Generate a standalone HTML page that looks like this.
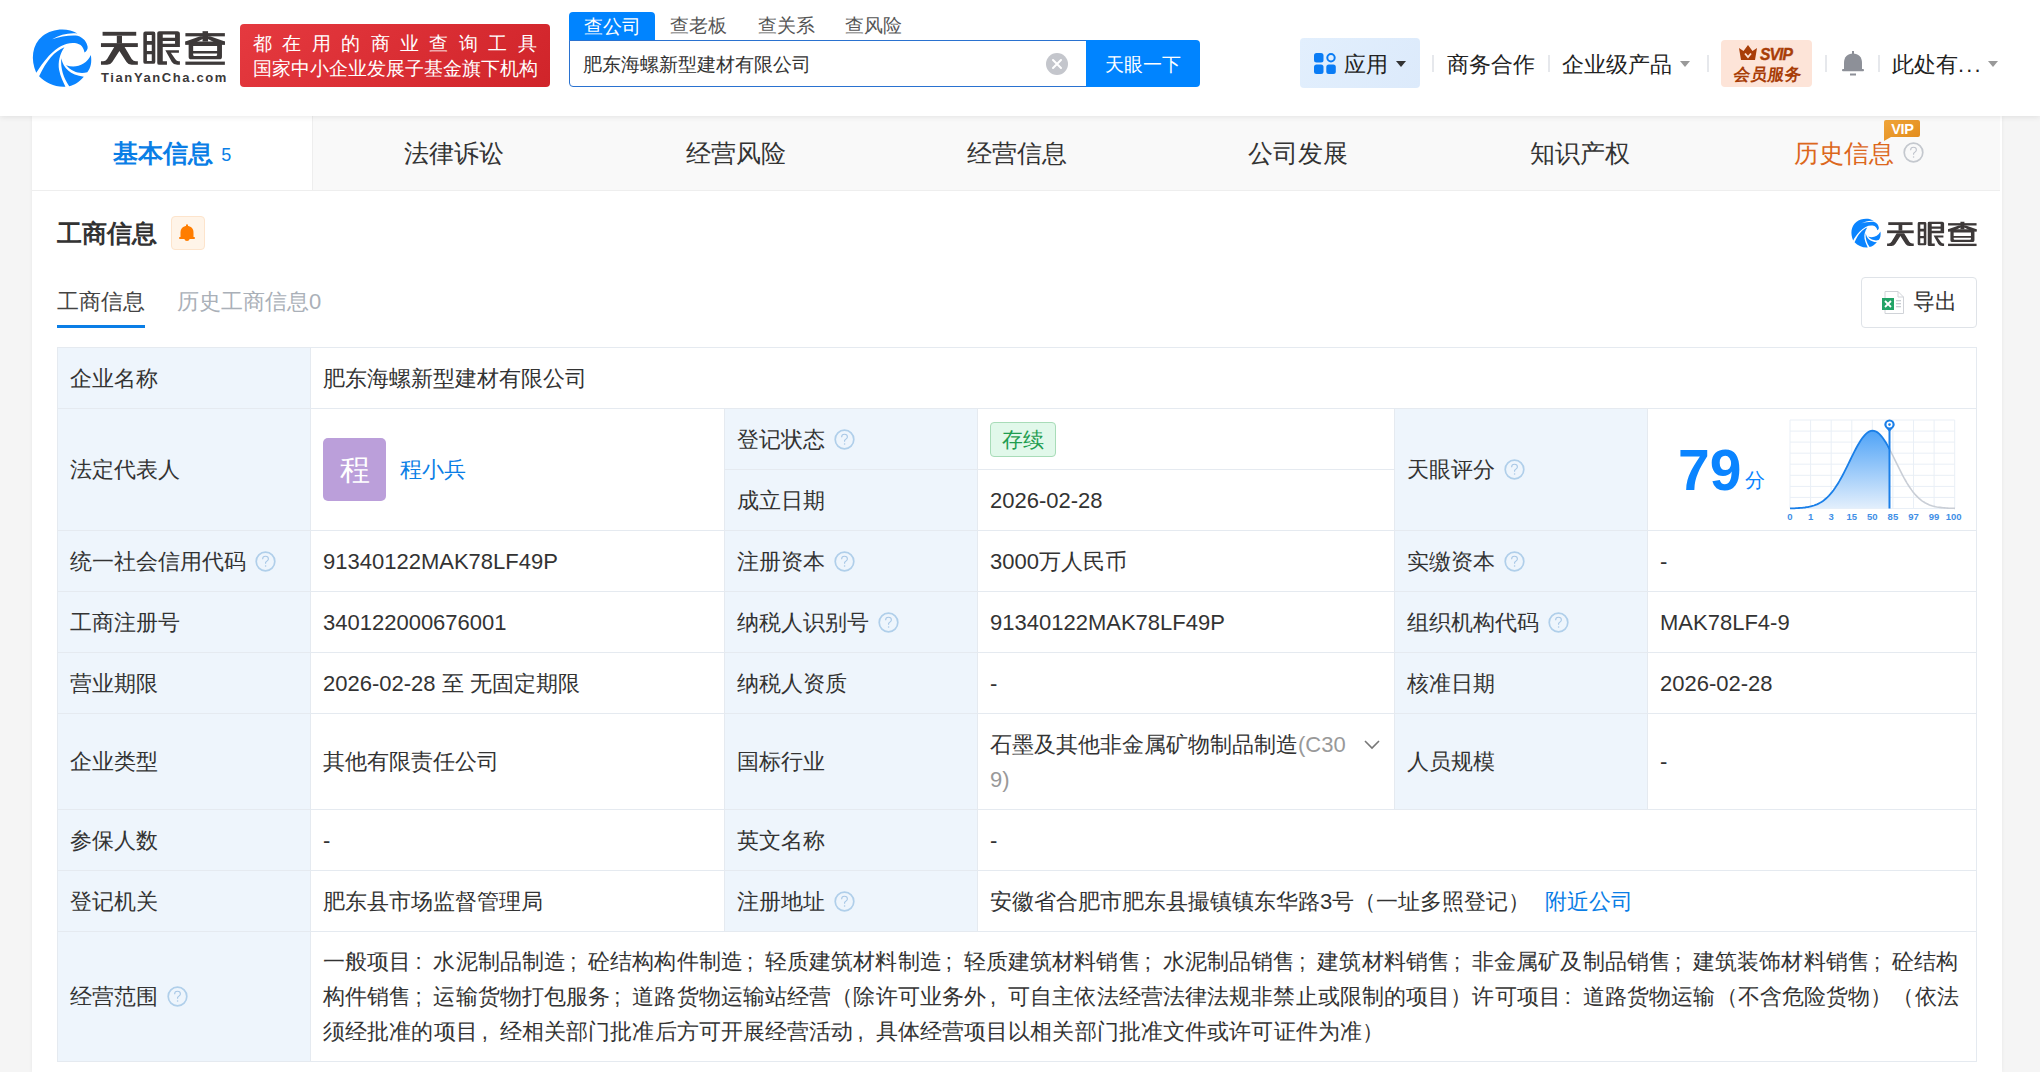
<!DOCTYPE html>
<html><head><meta charset="utf-8">
<style>
*{box-sizing:border-box;margin:0;padding:0}
html,body{width:2040px;height:1072px;overflow:hidden}
body{background:#f5f5f5;font-family:"Liberation Sans",sans-serif;color:#333;position:relative}
.a{position:absolute;white-space:nowrap}
#hdr{position:absolute;left:0;top:0;width:2040px;height:116px;background:#fff;box-shadow:0 1px 6px rgba(0,0,0,.09);z-index:5}
.banner{left:240px;top:24px;width:310px;height:63px;border-radius:4px;background:linear-gradient(135deg,#e5393f,#d0242a);color:#fff}
.stab{top:12px;height:28px;font-size:18.5px;line-height:28px;color:#555}
.sep{width:2px;height:17px;top:55px;background:#e6e8ec}
.nav{top:51px;font-size:21.8px;line-height:28px;color:#222}
.card{position:absolute;left:32px;top:116px;width:1970px;height:956px;background:#fff;box-shadow:0 0 4px rgba(0,0,0,.06)}
.tab{top:0;height:75px;width:281.43px;background:#f9f9f9;font-size:24.5px;line-height:75px;text-align:center;color:#333;border-bottom:1px solid #eee}
.c{position:absolute;border:1px solid #e5eaf0;font-size:22px;line-height:35px;padding:12px 12px;white-space:nowrap;color:#333}
.l{background:#eef5fc}
.q{display:inline-block;vertical-align:middle;margin-left:9px;position:relative;top:0px}
.c{display:flex;align-items:center}
.av{display:inline-block;width:63px;height:63px;border-radius:5px;background:#bb9fda;color:#fff;font-size:30px;line-height:63px;text-align:center}
.lnk{color:#0a7ee6}
.tag{display:inline-block;height:35px;padding:0 11px;border:1px solid #a8dcb8;background:#e1f8ea;border-radius:4px;color:#1f9d50;font-size:21px;line-height:33px}
.chev{position:absolute;right:14px;top:26px}
.pl{display:inline-block;width:22px;padding-left:4px;font-style:normal}
</style></head><body>
<svg width="0" height="0" style="position:absolute"><defs>
<symbol id="lt" viewBox="0 0 2040 680"><g fill="#3d3939">
<rect x="70" y="90" width="520" height="60"/>
<rect x="45" y="265" width="570" height="60"/>
<rect x="290" y="150" width="80" height="120"/>
<path d="M250,325 L410,325 L520,510 Q545,545 585,545 L615,545 L615,600 L520,600 Q470,600 440,555 L330,385 L220,555 Q190,600 140,600 L45,600 L45,545 L80,545 Q115,545 140,510 Z"/>
<path fill-rule="evenodd" d="M730,85 L855,85 Q885,85 885,115 L885,555 Q885,585 855,585 L730,585 Q700,585 700,555 L700,115 Q700,85 730,85 Z M755,140 L830,140 L830,230 L755,230 Z M755,290 L830,290 L830,385 L755,385 Z M755,435 L830,435 L830,540 L755,540 Z"/>
<path fill-rule="evenodd" d="M945,80 L1225,80 Q1265,80 1265,120 L1265,325 L1000,325 L1000,545 L1065,545 L1065,600 L945,600 Q915,600 915,570 L915,110 Q915,80 945,80 Z M1000,130 L1190,130 L1190,180 L1000,180 Z M1000,230 L1190,230 L1190,275 L1000,275 Z"/>
<path d="M1040,375 L1250,375 L1250,415 L1125,415 L1195,515 Q1215,545 1245,545 L1265,545 L1265,600 L1225,600 Q1170,600 1140,555 Z"/>
<rect x="1350" y="110" width="610" height="50"/>
<rect x="1615" y="80" width="85" height="160"/>
<path d="M1350,240 L1580,160 L1640,160 L1640,190 L1490,265 L1350,290 Z"/>
<path d="M1960,240 L1730,160 L1675,160 L1675,190 L1825,265 L1960,290 Z"/>
<path fill-rule="evenodd" d="M1350,240 L1960,240 L1960,290 L1915,290 L1915,475 Q1915,515 1875,515 L1440,515 Q1400,515 1400,475 L1400,290 L1350,290 Z M1470,310 L1840,310 L1840,385 L1470,385 Z M1470,425 L1840,425 L1840,445 Q1840,465 1820,465 L1490,465 Q1470,465 1470,445 Z"/>
<rect x="1350" y="550" width="610" height="50"/>
</g></symbol></defs></svg>

<div id="hdr">
  <!-- logo icon -->
  <svg class="a" style="left:28px;top:24px" width="68" height="68" viewBox="0 0 1072 1072">
    <g fill="#0a84ff">
      <path d="M130,770 C40,560 60,330 230,190 C380,70 620,50 780,150 C640,135 500,170 380,240 C500,200 650,175 780,185 C880,215 930,290 940,360 C945,400 925,430 890,450 C880,380 840,310 740,300 C620,285 480,340 330,500 C240,600 180,690 130,770 Z"/>
      <path d="M175,825 C300,560 420,430 575,365 C500,470 470,600 490,720 C510,830 560,920 590,990 C420,1000 280,930 175,825 Z"/>
      <path d="M525,540 C560,700 660,800 880,830 C800,920 730,960 650,980 C560,850 510,700 525,540 Z"/>
      <path d="M600,650 C750,700 920,650 990,490 C1010,600 990,700 935,760 C820,790 700,760 600,650 Z"/>
    </g>
  </svg>
  <svg class="a" style="left:98.1px;top:25.8px" width="132.1" height="44"><use href="#lt"/></svg>
  <div class="a" style="left:101px;top:70px;font-size:13px;line-height:16px;font-weight:bold;color:#3b3839;letter-spacing:1.6px">TianYanCha.com</div>
  <div class="a banner">
    <div class="a" style="left:13px;top:8px;font-size:19px;line-height:24px;letter-spacing:10.4px">都在用的商业查询工具</div>
    <div class="a" style="left:13px;top:33px;font-size:19px;line-height:24px">国家中小企业发展子基金旗下机构</div>
  </div>
  <!-- search tabs -->
  <div class="a" style="left:569px;top:12px;width:86px;height:29px;background:#0084ff;border-radius:4px 4px 0 0;color:#fff;font-size:18.5px;line-height:30px;text-align:center">查公司</div>
  <div class="a stab" style="left:670px">查老板</div>
  <div class="a stab" style="left:758px">查关系</div>
  <div class="a stab" style="left:845px">查风险</div>
  <div class="a" style="left:569px;top:40px;width:520px;height:47px;border:1px solid #2a72d0;border-radius:0 0 0 4px;background:#fff"></div>
  <div class="a" style="left:583px;top:51px;font-size:18.5px;line-height:28px;color:#333">肥东海螺新型建材有限公司</div>
  <div class="a" style="left:1045.5px;top:52.5px;width:22px;height:22px;border-radius:50%;background:#c4c6cc">
    <svg width="22" height="22" viewBox="0 0 22 22" style="position:absolute;left:0;top:0"><path d="M7,7 L15,15 M15,7 L7,15" stroke="#fff" stroke-width="2" stroke-linecap="round"/></svg>
  </div>
  <div class="a" style="left:1086px;top:40px;width:114px;height:47px;background:#0084ff;border-radius:0 4px 4px 0;color:#fff;font-size:18.5px;line-height:49px;text-align:center">天眼一下</div>
  <!-- right nav -->
  <div class="a" style="left:1300px;top:38px;width:120px;height:50px;border-radius:4px;background:linear-gradient(120deg,#e2effd,#dceafb)"></div>
  <svg class="a" style="left:1314px;top:53px" width="22" height="21" viewBox="0 0 22 21">
    <rect x="0" y="0" width="9.5" height="9.5" rx="2.5" fill="#0a7cf5"/>
    <circle cx="17" cy="4.8" r="3.7" fill="none" stroke="#0a7cf5" stroke-width="2"/>
    <rect x="0" y="11.5" width="9.5" height="9.5" rx="2.5" fill="#0a7cf5"/>
    <rect x="12.3" y="11.5" width="9.5" height="9.5" rx="2.5" fill="#0a7cf5"/>
  </svg>
  <div class="a nav" style="left:1344px;font-weight:normal">应用</div>
  <svg class="a" style="left:1396px;top:61px" width="10" height="7" viewBox="0 0 10 7"><path d="M0,0 L10,0 L5,6 Z" fill="#333"/></svg>
  <div class="a sep" style="left:1432px"></div>
  <div class="a nav" style="left:1447px">商务合作</div>
  <div class="a sep" style="left:1548px"></div>
  <div class="a nav" style="left:1562px">企业级产品</div>
  <svg class="a" style="left:1680px;top:61px" width="10" height="7" viewBox="0 0 10 7"><path d="M0,0 L10,0 L5,6 Z" fill="#999"/></svg>
  <div class="a sep" style="left:1707px"></div>
  <div class="a" style="left:1721px;top:40px;width:91px;height:47px;border-radius:4px;background:#fde4d8"></div>
  <svg class="a" style="left:1739px;top:45px" width="18" height="15" viewBox="0 0 18 15">
    <path d="M0,3 L4.5,6 L9,0 L13.5,6 L18,3 L16,15 L2,15 Z" fill="#a83d08"/>
    <path d="M6,8.5 L9,12 L12,8.5" stroke="#fde4d8" stroke-width="1.8" fill="none"/>
  </svg>
  <div class="a" style="left:1760px;top:43.5px;font-size:17px;line-height:22px;font-weight:bold;font-style:italic;color:#a83d08;letter-spacing:-1px;transform:scaleX(0.92);transform-origin:0 0;-webkit-text-stroke:0.4px #a83d08">SVIP</div>
  <div class="a" style="left:1734px;top:63px;font-size:16.5px;line-height:22px;font-weight:bold;color:#a83d08;transform:skewX(-8deg)">会员服务</div>
  <div class="a sep" style="left:1825px"></div>
  <svg class="a" style="left:1842px;top:51px" width="22" height="25" viewBox="0 0 22 25">
    <rect x="10" y="0" width="2" height="3" fill="#8d9098"/>
    <path d="M2,19 L2,12 C2,6 5.5,2.5 11,2.5 C16.5,2.5 20,6 20,12 L20,19 Z" fill="#8d9098"/>
    <rect x="0" y="18" width="22" height="2.2" rx="1" fill="#8d9098"/>
    <rect x="8" y="22.5" width="6" height="2" fill="#8d9098"/>
  </svg>
  <div class="a sep" style="left:1878px"></div>
  <div class="a nav" style="left:1892px">此处有<span style="letter-spacing:2.2px">...</span></div>
  <svg class="a" style="left:1988px;top:61px" width="10" height="7" viewBox="0 0 10 7"><path d="M0,0 L10,0 L5,6 Z" fill="#999"/></svg>
</div>

<div class="card">
  <!-- main tabs -->
  <div class="a tab" style="left:0;background:#fff;border-right:1px solid #eee;border-bottom:1px solid #eee;color:#0a7ee6;font-weight:bold">基本信息<span style="font-size:18px;font-weight:normal;margin-left:8px;position:relative;top:-1px">5</span></div>
  <div class="a tab" style="left:281.43px">法律诉讼</div>
  <div class="a tab" style="left:562.86px">经营风险</div>
  <div class="a tab" style="left:844.29px">经营信息</div>
  <div class="a tab" style="left:1125.71px">公司发展</div>
  <div class="a tab" style="left:1407.14px">知识产权</div>
  <div class="a tab" style="left:1688.57px;width:279px;color:#dc671c;padding-right:2px">历史信息<svg class="q" style="margin-left:9px;top:-3px" width="21" height="21" viewBox="0 0 21 21"><circle cx="10.5" cy="10.5" r="9.3" fill="none" stroke="#c4c8ce" stroke-width="1.7"/><path d="M7.6,8.2 C7.6,6.3 9,5.3 10.5,5.3 C12.1,5.3 13.4,6.4 13.4,7.9 C13.4,9.6 11.5,10 10.6,11.4 L10.6,12.8" fill="none" stroke="#c0c4cc" stroke-width="1.1"/><circle cx="10.6" cy="15" r="0.8" fill="#c0c4cc"/></svg></div>
  <!-- VIP badge -->
  <svg class="a" style="left:1851px;top:3px" width="38" height="23" viewBox="0 0 38 23">
    <defs><linearGradient id="vg" x1="0" y1="0" x2="1" y2="1"><stop offset="0" stop-color="#f0a53a"/><stop offset="1" stop-color="#e18a1a"/></linearGradient></defs>
    <path d="M3,1 L35,1 Q37,1 37,3 L37,16 Q37,18 35,18 L8,18 L1,22 L1,3 Q1,1 3,1 Z" fill="url(#vg)"/>
    <text x="19.5" y="15" font-family="Liberation Sans" font-size="14.5" font-weight="bold" fill="#fff" text-anchor="middle" letter-spacing="-0.3">VIP</text>
  </svg>

  <!-- section title -->
  <div class="a" style="left:25px;top:97px;font-size:25px;line-height:40px;font-weight:bold;color:#333">工商信息</div>
  <div class="a" style="left:139px;top:100px;width:34px;height:34px;border-radius:4px;background:#fff4e8;border:1px solid #fde4cc"></div>
  <svg class="a" style="left:147px;top:108px" width="16" height="18" viewBox="0 0 16 18">
    <path d="M1.5,14 L1.5,8.5 C1.5,4.5 4,2 8,2 C12,2 14.5,4.5 14.5,8.5 L14.5,14 Z" fill="#ff7d00"/>
    <rect x="0" y="13" width="16" height="2" rx="1" fill="#ff7d00"/>
    <path d="M5.5,15 C5.5,17.5 10.5,17.5 10.5,15 Z" fill="#ff7d00"/>
    <rect x="7" y="0.5" width="2" height="2.5" fill="#ff7d00"/>
  </svg>
  <!-- right logo -->
  <svg class="a" style="left:1817px;top:100px" width="34" height="34" viewBox="0 0 1072 1072">
    <g fill="#0a84ff">
      <path d="M130,770 C40,560 60,330 230,190 C380,70 620,50 780,150 C640,135 500,170 380,240 C500,200 650,175 780,185 C880,215 930,290 940,360 C945,400 925,430 890,450 C880,380 840,310 740,300 C620,285 480,340 330,500 C240,600 180,690 130,770 Z"/>
      <path d="M175,825 C300,560 420,430 575,365 C500,470 470,600 490,720 C510,830 560,920 590,990 C420,1000 280,930 175,825 Z"/>
      <path d="M525,540 C560,700 660,800 880,830 C800,920 730,960 650,980 C560,850 510,700 525,540 Z"/>
      <path d="M600,650 C750,700 920,650 990,490 C1010,600 990,700 935,760 C820,790 700,760 600,650 Z"/>
    </g>
  </svg>
  <svg class="a" style="left:1852.8px;top:101.8px" width="95.3" height="31.8"><use href="#lt"/></svg>

  <!-- sub tabs -->
  <div class="a" style="left:25px;top:170px;font-size:22px;line-height:32px;color:#444">工商信息</div>
  <div class="a" style="left:25px;top:209px;width:88px;height:3px;background:#0a7ee6"></div>
  <div class="a" style="left:145px;top:170px;font-size:22px;line-height:32px;color:#aab0b8">历史工商信息0</div>
  <!-- export -->
  <div class="a" style="left:1829px;top:161px;width:116px;height:51px;border:1px solid #dfe3e8;border-radius:4px;background:#fff"></div>
  <svg class="a" style="left:1850px;top:175px" width="22" height="23" viewBox="0 0 22 23">
    <path d="M3,0.5 L16,0.5 L21.5,6 L21.5,22.5 L3,22.5 Z" fill="#fff" stroke="#d0d3d8" stroke-width="1"/>
    <path d="M16,0.5 L16,6 L21.5,6" fill="none" stroke="#d0d3d8" stroke-width="1"/>
    <rect x="14" y="9" width="5" height="1.3" fill="#c8ccd2"/><rect x="14" y="12" width="5" height="1.3" fill="#c8ccd2"/><rect x="14" y="15" width="5" height="1.3" fill="#c8ccd2"/>
    <rect x="0" y="7" width="12" height="12" fill="#21a366"/>
    <path d="M3,10 L9,16 M9,10 L3,16" stroke="#fff" stroke-width="1.8"/>
  </svg>
  <div class="a" style="left:1881px;top:170px;font-size:22px;line-height:32px;color:#333">导出</div>
</div>

<!-- TABLE (page coords) -->
<div id="tbl">
<div class="c l" style="left:57px;top:347px;width:254px;height:62px;">企业名称</div>
<div class="c" style="left:310px;top:347px;width:1667px;height:62px;">肥东海螺新型建材有限公司</div>
<div class="c l" style="left:57px;top:408px;width:254px;height:123px;">法定代表人</div>
<div class="c" style="left:310px;top:408px;width:415px;height:123px;"><span class="av">程</span><span class="lnk" style="margin-left:14px">程小兵</span></div>
<div class="c l" style="left:724px;top:408px;width:254px;height:62px;">登记状态<svg class="q" width="21" height="21" viewBox="0 0 21 21"><circle cx="10.5" cy="10.5" r="9.3" fill="none" stroke="#b0cfea" stroke-width="1.7"/><path d="M7.6,8.2 C7.6,6.3 9,5.3 10.5,5.3 C12.1,5.3 13.4,6.4 13.4,7.9 C13.4,9.6 11.5,10 10.6,11.4 L10.6,12.8" fill="none" stroke="#a9c8e6" stroke-width="1.1"/><circle cx="10.6" cy="15" r="0.8" fill="#a9c8e6"/></svg></div>
<div class="c" style="left:977px;top:408px;width:418px;height:62px;"><span class="tag">存续</span></div>
<div class="c l" style="left:724px;top:469px;width:254px;height:62px;">成立日期</div>
<div class="c" style="left:977px;top:469px;width:418px;height:62px;">2026-02-28</div>
<div class="c l" style="left:1394px;top:408px;width:254px;height:123px;">天眼评分<svg class="q" width="21" height="21" viewBox="0 0 21 21"><circle cx="10.5" cy="10.5" r="9.3" fill="none" stroke="#b0cfea" stroke-width="1.7"/><path d="M7.6,8.2 C7.6,6.3 9,5.3 10.5,5.3 C12.1,5.3 13.4,6.4 13.4,7.9 C13.4,9.6 11.5,10 10.6,11.4 L10.6,12.8" fill="none" stroke="#a9c8e6" stroke-width="1.1"/><circle cx="10.6" cy="15" r="0.8" fill="#a9c8e6"/></svg></div>
<div class="c" style="left:1647px;top:408px;width:330px;height:123px;"><div class="a" style="left:30px;top:33px;font-size:57px;line-height:57px;font-weight:bold;color:#0a84ff">79</div><div class="a" style="left:97px;top:59px;font-size:20px;line-height:24px;color:#0a84ff">分</div><svg style="position:absolute;left:141.7px;top:10.7px;overflow:visible" width="166" height="105" viewBox="0 0 166 105">
<defs><linearGradient id="cf" x1="0" y1="0" x2="0" y2="1"><stop offset="0" stop-color="#4fa3f7"/><stop offset="1" stop-color="#e3effc"/></linearGradient></defs>
<g stroke="#e9eff6" stroke-width="1" fill="none"><path d="M0.0,0 V88.5"/><path d="M20.6,0 V88.5"/><path d="M41.2,0 V88.5"/><path d="M61.8,0 V88.5"/><path d="M82.3,0 V88.5"/><path d="M102.9,0 V88.5"/><path d="M123.5,0 V88.5"/><path d="M144.1,0 V88.5"/><path d="M164.7,0 V88.5"/><path d="M0,0.0 H164.7"/><path d="M0,11.1 H164.7"/><path d="M0,22.1 H164.7"/><path d="M0,33.2 H164.7"/><path d="M0,44.2 H164.7"/><path d="M0,55.3 H164.7"/><path d="M0,66.4 H164.7"/><path d="M0,77.4 H164.7"/><path d="M0,88.5 H164.7"/></g>
<path d="M0,88.5 L0.0,88.4 1.5,88.3 3.0,88.3 4.5,88.3 6.0,88.2 7.5,88.1 9.0,88.0 10.5,87.9 12.0,87.8 13.5,87.6 15.0,87.5 16.5,87.2 18.0,87.0 19.5,86.7 21.0,86.3 22.5,85.9 24.0,85.5 25.5,84.9 27.0,84.3 28.5,83.6 30.0,82.8 31.5,81.9 33.0,80.9 34.5,79.8 36.0,78.5 37.5,77.1 39.0,75.6 40.5,73.9 42.0,72.1 43.5,70.2 45.0,68.1 46.5,65.8 48.0,63.4 49.5,60.9 51.0,58.2 52.5,55.5 54.0,52.6 55.5,49.6 57.0,46.6 58.5,43.6 60.0,40.5 61.5,37.4 63.0,34.4 64.5,31.4 66.0,28.5 67.5,25.8 69.0,23.2 70.5,20.8 72.0,18.5 73.5,16.6 75.0,14.8 76.5,13.4 78.0,12.2 79.5,11.4 81.0,10.9 82.5,10.7 84.0,10.8 85.5,11.3 87.0,12.1 88.5,13.2 90.0,14.6 91.5,16.3 93.0,18.3 94.5,20.4 96.0,22.8 97.5,25.4 99.0,28.2 99.5,29.1 L99.5,88.5 Z" fill="url(#cf)"/>
<path d="M99.5,29.1 100.5,31.0 102.0,34.0 103.5,37.0 105.0,40.1 106.5,43.2 108.0,46.2 109.5,49.2 111.0,52.2 112.5,55.1 114.0,57.9 115.5,60.5 117.0,63.1 118.5,65.5 120.0,67.8 121.5,69.9 123.0,71.9 124.5,73.7 126.0,75.4 127.5,76.9 129.0,78.3 130.5,79.6 132.0,80.8 133.5,81.8 135.0,82.7 136.5,83.5 138.0,84.2 139.5,84.9 141.0,85.4 142.5,85.9 144.0,86.3 145.5,86.7 147.0,87.0 148.5,87.2 150.0,87.4 151.5,87.6 153.0,87.8 154.5,87.9 156.0,88.0 157.5,88.1 159.0,88.2 160.5,88.2 162.0,88.3 163.5,88.3 165.0,88.4 164.7,88.4" fill="none" stroke="#c9ced6" stroke-width="1.6"/>
<path d="M0.0,88.4 1.5,88.3 3.0,88.3 4.5,88.3 6.0,88.2 7.5,88.1 9.0,88.0 10.5,87.9 12.0,87.8 13.5,87.6 15.0,87.5 16.5,87.2 18.0,87.0 19.5,86.7 21.0,86.3 22.5,85.9 24.0,85.5 25.5,84.9 27.0,84.3 28.5,83.6 30.0,82.8 31.5,81.9 33.0,80.9 34.5,79.8 36.0,78.5 37.5,77.1 39.0,75.6 40.5,73.9 42.0,72.1 43.5,70.2 45.0,68.1 46.5,65.8 48.0,63.4 49.5,60.9 51.0,58.2 52.5,55.5 54.0,52.6 55.5,49.6 57.0,46.6 58.5,43.6 60.0,40.5 61.5,37.4 63.0,34.4 64.5,31.4 66.0,28.5 67.5,25.8 69.0,23.2 70.5,20.8 72.0,18.5 73.5,16.6 75.0,14.8 76.5,13.4 78.0,12.2 79.5,11.4 81.0,10.9 82.5,10.7 84.0,10.8 85.5,11.3 87.0,12.1 88.5,13.2 90.0,14.6 91.5,16.3 93.0,18.3 94.5,20.4 96.0,22.8 97.5,25.4 99.0,28.2 99.5,29.1" fill="none" stroke="#1a7fe8" stroke-width="1.8"/>
<path d="M99.5,8 V88.5" stroke="#1a7fe8" stroke-width="2"/>
<path d="M94.3,4.6 A5.2,5.2 0 1,1 104.7,4.6 C104.7,7.5 101.3,9.5 99.5,12 C97.7,9.5 94.3,7.5 94.3,4.6 Z" fill="#1a7fe8"/>
<circle cx="99.5" cy="4.6" r="3" fill="#fff"/><circle cx="99.5" cy="4.6" r="1.3" fill="#1a7fe8"/>
<g font-family="Liberation Sans" font-size="9.5" font-weight="bold" fill="#3f8fe6" text-anchor="middle"><text x="0.0" y="99.5">0</text><text x="20.6" y="99.5">1</text><text x="41.2" y="99.5">3</text><text x="61.8" y="99.5">15</text><text x="82.3" y="99.5">50</text><text x="102.9" y="99.5">85</text><text x="123.5" y="99.5">97</text><text x="144.1" y="99.5">99</text><text x="163.7" y="99.5">100</text></g>
</svg></div>
<div class="c l" style="left:57px;top:530px;width:254px;height:62px;">统一社会信用代码<svg class="q" width="21" height="21" viewBox="0 0 21 21"><circle cx="10.5" cy="10.5" r="9.3" fill="none" stroke="#b0cfea" stroke-width="1.7"/><path d="M7.6,8.2 C7.6,6.3 9,5.3 10.5,5.3 C12.1,5.3 13.4,6.4 13.4,7.9 C13.4,9.6 11.5,10 10.6,11.4 L10.6,12.8" fill="none" stroke="#a9c8e6" stroke-width="1.1"/><circle cx="10.6" cy="15" r="0.8" fill="#a9c8e6"/></svg></div>
<div class="c" style="left:310px;top:530px;width:415px;height:62px;">91340122MAK78LF49P</div>
<div class="c l" style="left:724px;top:530px;width:254px;height:62px;">注册资本<svg class="q" width="21" height="21" viewBox="0 0 21 21"><circle cx="10.5" cy="10.5" r="9.3" fill="none" stroke="#b0cfea" stroke-width="1.7"/><path d="M7.6,8.2 C7.6,6.3 9,5.3 10.5,5.3 C12.1,5.3 13.4,6.4 13.4,7.9 C13.4,9.6 11.5,10 10.6,11.4 L10.6,12.8" fill="none" stroke="#a9c8e6" stroke-width="1.1"/><circle cx="10.6" cy="15" r="0.8" fill="#a9c8e6"/></svg></div>
<div class="c" style="left:977px;top:530px;width:418px;height:62px;">3000万人民币</div>
<div class="c l" style="left:1394px;top:530px;width:254px;height:62px;">实缴资本<svg class="q" width="21" height="21" viewBox="0 0 21 21"><circle cx="10.5" cy="10.5" r="9.3" fill="none" stroke="#b0cfea" stroke-width="1.7"/><path d="M7.6,8.2 C7.6,6.3 9,5.3 10.5,5.3 C12.1,5.3 13.4,6.4 13.4,7.9 C13.4,9.6 11.5,10 10.6,11.4 L10.6,12.8" fill="none" stroke="#a9c8e6" stroke-width="1.1"/><circle cx="10.6" cy="15" r="0.8" fill="#a9c8e6"/></svg></div>
<div class="c" style="left:1647px;top:530px;width:330px;height:62px;">-</div>
<div class="c l" style="left:57px;top:591px;width:254px;height:62px;">工商注册号</div>
<div class="c" style="left:310px;top:591px;width:415px;height:62px;">340122000676001</div>
<div class="c l" style="left:724px;top:591px;width:254px;height:62px;">纳税人识别号<svg class="q" width="21" height="21" viewBox="0 0 21 21"><circle cx="10.5" cy="10.5" r="9.3" fill="none" stroke="#b0cfea" stroke-width="1.7"/><path d="M7.6,8.2 C7.6,6.3 9,5.3 10.5,5.3 C12.1,5.3 13.4,6.4 13.4,7.9 C13.4,9.6 11.5,10 10.6,11.4 L10.6,12.8" fill="none" stroke="#a9c8e6" stroke-width="1.1"/><circle cx="10.6" cy="15" r="0.8" fill="#a9c8e6"/></svg></div>
<div class="c" style="left:977px;top:591px;width:418px;height:62px;">91340122MAK78LF49P</div>
<div class="c l" style="left:1394px;top:591px;width:254px;height:62px;">组织机构代码<svg class="q" width="21" height="21" viewBox="0 0 21 21"><circle cx="10.5" cy="10.5" r="9.3" fill="none" stroke="#b0cfea" stroke-width="1.7"/><path d="M7.6,8.2 C7.6,6.3 9,5.3 10.5,5.3 C12.1,5.3 13.4,6.4 13.4,7.9 C13.4,9.6 11.5,10 10.6,11.4 L10.6,12.8" fill="none" stroke="#a9c8e6" stroke-width="1.1"/><circle cx="10.6" cy="15" r="0.8" fill="#a9c8e6"/></svg></div>
<div class="c" style="left:1647px;top:591px;width:330px;height:62px;">MAK78LF4-9</div>
<div class="c l" style="left:57px;top:652px;width:254px;height:62px;">营业期限</div>
<div class="c" style="left:310px;top:652px;width:415px;height:62px;">2026-02-28 至 无固定期限</div>
<div class="c l" style="left:724px;top:652px;width:254px;height:62px;">纳税人资质</div>
<div class="c" style="left:977px;top:652px;width:418px;height:62px;">-</div>
<div class="c l" style="left:1394px;top:652px;width:254px;height:62px;">核准日期</div>
<div class="c" style="left:1647px;top:652px;width:330px;height:62px;">2026-02-28</div>
<div class="c l" style="left:57px;top:713px;width:254px;height:97px;">企业类型</div>
<div class="c" style="left:310px;top:713px;width:415px;height:97px;">其他有限责任公司</div>
<div class="c l" style="left:724px;top:713px;width:254px;height:97px;">国标行业</div>
<div class="c" style="left:977px;top:713px;width:418px;height:97px;"><div>石墨及其他非金属矿物制品制造<span style="color:#999">(C30</span><br><span style="color:#999">9)</span></div><svg class="chev" width="16" height="10" viewBox="0 0 16 10"><path d="M1,1 L8,8 L15,1" fill="none" stroke="#777" stroke-width="1.6"/></svg></div>
<div class="c l" style="left:1394px;top:713px;width:254px;height:97px;">人员规模</div>
<div class="c" style="left:1647px;top:713px;width:330px;height:97px;">-</div>
<div class="c l" style="left:57px;top:809px;width:254px;height:62px;">参保人数</div>
<div class="c" style="left:310px;top:809px;width:415px;height:62px;">-</div>
<div class="c l" style="left:724px;top:809px;width:254px;height:62px;">英文名称</div>
<div class="c" style="left:977px;top:809px;width:1000px;height:62px;">-</div>
<div class="c l" style="left:57px;top:870px;width:254px;height:62px;">登记机关</div>
<div class="c" style="left:310px;top:870px;width:415px;height:62px;">肥东县市场监督管理局</div>
<div class="c l" style="left:724px;top:870px;width:254px;height:62px;">注册地址<svg class="q" width="21" height="21" viewBox="0 0 21 21"><circle cx="10.5" cy="10.5" r="9.3" fill="none" stroke="#b0cfea" stroke-width="1.7"/><path d="M7.6,8.2 C7.6,6.3 9,5.3 10.5,5.3 C12.1,5.3 13.4,6.4 13.4,7.9 C13.4,9.6 11.5,10 10.6,11.4 L10.6,12.8" fill="none" stroke="#a9c8e6" stroke-width="1.1"/><circle cx="10.6" cy="15" r="0.8" fill="#a9c8e6"/></svg></div>
<div class="c" style="left:977px;top:870px;width:1000px;height:62px;">安徽省合肥市肥东县撮镇镇东华路3号（一址多照登记）<span class="lnk" style="margin-left:15px">附近公司</span></div>
<div class="c l" style="left:57px;top:931px;width:254px;height:131px;">经营范围<svg class="q" width="21" height="21" viewBox="0 0 21 21"><circle cx="10.5" cy="10.5" r="9.3" fill="none" stroke="#b0cfea" stroke-width="1.7"/><path d="M7.6,8.2 C7.6,6.3 9,5.3 10.5,5.3 C12.1,5.3 13.4,6.4 13.4,7.9 C13.4,9.6 11.5,10 10.6,11.4 L10.6,12.8" fill="none" stroke="#a9c8e6" stroke-width="1.1"/><circle cx="10.6" cy="15" r="0.8" fill="#a9c8e6"/></svg></div>
<div class="c" style="left:310px;top:931px;width:1667px;height:131px;"><div style="letter-spacing:0.11px">一般项目<i class="pl">:</i>水泥制品制造<i class="pl">;</i>砼结构构件制造<i class="pl">;</i>轻质建筑材料制造<i class="pl">;</i>轻质建筑材料销售<i class="pl">;</i>水泥制品销售<i class="pl">;</i>建筑材料销售<i class="pl">;</i>非金属矿及制品销售<i class="pl">;</i>建筑装饰材料销售<i class="pl">;</i>砼结构<br>构件销售<i class="pl">;</i>运输货物打包服务<i class="pl">;</i>道路货物运输站经营（除许可业务外<i class="pl">,</i>可自主依法经营法律法规非禁止或限制的项目）许可项目<i class="pl">:</i>道路货物运输（不含危险货物）（依法<br>须经批准的项目<i class="pl">,</i>经相关部门批准后方可开展经营活动<i class="pl">,</i>具体经营项目以相关部门批准文件或许可证件为准）</div></div>
</div>
</body></html>
